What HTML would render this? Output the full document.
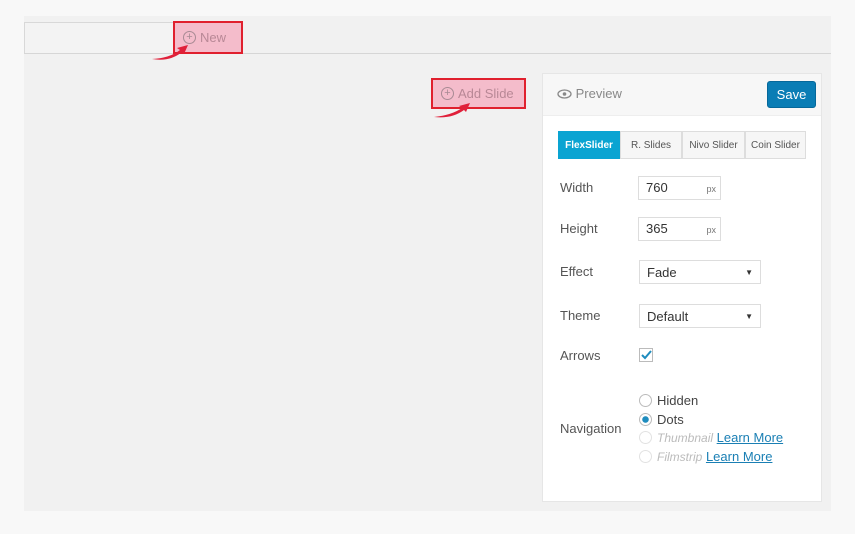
<!DOCTYPE html>
<html><head><style>
*{margin:0;padding:0;box-sizing:border-box}
body{width:855px;height:534px;background:#f8f8f8;font-family:"Liberation Sans",sans-serif;position:relative;overflow:hidden;color:#444}
.abs{position:absolute}
.area{left:24px;top:16px;width:807px;height:495px;background:#f1f1f1}
.tab{left:24px;top:22px;width:150px;height:32px;border:1px solid #d8d8d8;border-bottom:none;background:#f3f3f3}
.line{left:24px;top:53px;width:807px;height:1px;background:#d6d6d6}
.hl{background:#f4bccb;border:2px solid #e0202e;color:#b88896;font-size:13px;display:flex;align-items:center;gap:4px;padding-left:8px}
.circ{width:13px;height:13px;border:1px solid #a88a94;border-radius:50%;font-size:11px;line-height:10px;text-align:center;color:#a88a94}
.panel{left:542px;top:73px;width:280px;height:429px;background:#fff;border:1px solid #e6e6e6}
.hdr{height:42px;background:#f7f7f7;border-bottom:1px solid #eee}
.save{left:224px;top:7px;width:49px;height:27px;background:#0a7db5;border:1px solid #06689a;border-radius:3px;color:#fff;font-size:13px;text-align:center;line-height:25px}
.tabs{left:15px;top:57px;display:flex;font-size:10px}
.tabs div{height:28px;line-height:27px;border:1px solid #ddd;background:#f6f6f6;color:#555;text-align:center}
.lbl{font-size:13px;color:#555;left:17px}
.inp{border:1px solid #ddd;height:24px;font-size:13px;color:#333;padding-left:7px;line-height:22px}
.px{position:absolute;right:4px;top:1px;font-size:9px;color:#777}
.sel{border:1px solid #ddd;height:24px;width:122px;font-size:13px;color:#333;padding-left:7px;line-height:23px}
.sel:after{content:"▼";position:absolute;right:7px;top:0;font-size:8px;color:#333}
.rad{width:13px;height:13px;border:1px solid #bbb;border-radius:50%;display:inline-block;vertical-align:-2px;margin-right:5px}
.nav{left:96px;font-size:13px;color:#444}
a{color:#1a7fb4;text-decoration:underline}
</style></head><body>
<div class="abs area"></div>
<div class="abs tab"></div>
<div class="abs line"></div>
<div class="abs hl" style="left:173px;top:21px;width:70px;height:33px"><span class="circ">+</span>New</div>
<svg class="abs" style="left:150px;top:42px" width="42" height="20"><path d="M2 17 Q20 16 30 8 L27 6 L38 3 L34 12 L32 10 Q20 20 2 17Z" fill="#e0203a"/></svg>
<div class="abs hl" style="left:431px;top:78px;width:95px;height:31px"><span class="circ">+</span>Add Slide</div>
<svg class="abs" style="left:432px;top:100px" width="42" height="20"><path d="M2 17 Q20 15 30 8 L27 6 L38 3 L34 12 L32 10 Q20 19 2 17Z" fill="#e0203a"/></svg>
<div class="abs panel">
 <div class="hdr"></div>
 <div class="abs" style="left:14px;top:12px;font-size:13px;color:#888"><svg width="15" height="10" style="vertical-align:-1px"><ellipse cx="7.5" cy="5" rx="6.5" ry="4" fill="none" stroke="#888" stroke-width="1.3"/><circle cx="7.5" cy="5" r="1.8" fill="#888"/></svg> Preview</div>
 <div class="abs save">Save</div>
 <div class="abs tabs"><div style="width:62px;background:#0aa4d2;color:#fff;border-color:#0aa4d2;font-weight:bold">FlexSlider</div><div style="width:62px">R. Slides</div><div style="width:63px">Nivo Slider</div><div style="width:61px">Coin Slider</div></div>
 <div class="abs lbl" style="top:106px">Width</div>
 <div class="abs inp" style="left:95px;top:102px;width:83px">760<span class="px">px</span></div>
 <div class="abs lbl" style="top:147px">Height</div>
 <div class="abs inp" style="left:95px;top:143px;width:83px">365<span class="px">px</span></div>
 <div class="abs lbl" style="top:190px">Effect</div>
 <div class="abs sel" style="left:96px;top:186px">Fade</div>
 <div class="abs lbl" style="top:234px">Theme</div>
 <div class="abs sel" style="left:96px;top:230px">Default</div>
 <div class="abs lbl" style="top:274px">Arrows</div>
 <div class="abs" style="left:96px;top:274px;width:14px;height:14px;border:1px solid #bbb"><svg width="12" height="12" style="position:absolute;left:0;top:0"><path d="M2 6 L5 9 L11 2" fill="none" stroke="#1e8cbe" stroke-width="2"/></svg></div>
 <div class="abs lbl" style="top:347px">Navigation</div>
 <div class="abs nav" style="top:319px"><span class="rad"></span>Hidden</div>
 <div class="abs nav" style="top:338px"><span class="rad" style="background:radial-gradient(circle,#1e8cbe 3px,#fff 3.5px)"></span>Dots</div>
 <div class="abs nav" style="top:356px"><span class="rad" style="border-color:#e2e2e2"></span><i style="color:#bbb;font-size:12px">Thumbnail</i> <a>Learn More</a></div>
 <div class="abs nav" style="top:375px"><span class="rad" style="border-color:#e2e2e2"></span><i style="color:#bbb;font-size:12px">Filmstrip</i> <a>Learn More</a></div>
</div>
</body></html>
